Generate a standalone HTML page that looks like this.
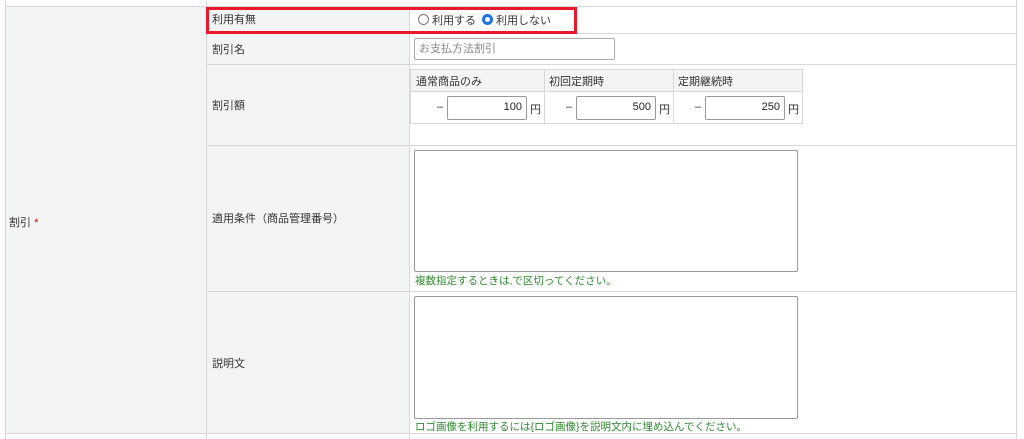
<!DOCTYPE html><html><head><meta charset="utf-8"><style>
*{box-sizing:border-box}body{margin:0;width:1024px;height:439px;background:#fff;position:relative;overflow:hidden;font-family:"Liberation Sans","Noto Sans CJK JP",sans-serif;font-size:11px;color:#333}
.a{position:absolute}
.h{position:absolute;height:1px;background:#d8d8d8}
.v{position:absolute;width:1px;background:#d8d8d8}
.inp{position:absolute;border:1px solid #999;border-radius:2px;background:#fff;text-align:right;padding-right:4px;font-size:11px;line-height:21px;color:#222}
.g{color:#2e8b2e;font-size:10.5px}
</style></head><body>
<div class="a" style="left:5px;top:6px;width:201px;height:427px;background:#f3f4f4"></div>
<div class="a" style="left:206px;top:6px;width:203px;height:427px;background:#f3f4f4"></div>
<div class="h" style="left:5px;top:6px;width:1012px"></div>
<div class="h" style="left:206px;top:33px;width:811px"></div>
<div class="h" style="left:206px;top:64px;width:811px"></div>
<div class="h" style="left:206px;top:145px;width:811px"></div>
<div class="h" style="left:206px;top:291px;width:811px"></div>
<div class="h" style="left:5px;top:433px;width:1012px"></div>
<div class="v" style="left:5px;top:0;height:439px"></div>
<div class="v" style="left:206px;top:0;height:439px"></div>
<div class="v" style="left:409px;top:6px;height:433px"></div>
<div class="v" style="left:1016px;top:0;height:439px"></div>
<div class="a" style="left:9px;top:214px">割引 <span style="color:#d00">*</span></div>
<div class="a" style="left:212px;top:11px">利用有無</div>
<div class="a" style="left:212px;top:41px">割引名</div>
<div class="a" style="left:212px;top:97px">割引額</div>
<div class="a" style="left:212px;top:210px">適用条件（商品管理番号）</div>
<div class="a" style="left:212px;top:355px">説明文</div>
<div class="a" style="left:206px;top:7px;width:371px;height:27px;border:3px solid #e8192c"></div>
<div class="a" style="left:418px;top:14px;width:11px;height:11px;border:1px solid #777;border-radius:50%;background:#fff"></div>
<div class="a" style="left:432px;top:12px">利用する</div>
<div class="a" style="left:482px;top:14px;width:11px;height:11px;border-radius:50%;background:#1a73e8"><div class="a" style="left:3px;top:3px;width:5px;height:5px;border-radius:50%;background:#fff"></div></div>
<div class="a" style="left:496px;top:12px">利用しない</div>
<div class="a" style="left:414px;top:38px;width:201px;height:22px;border:1px solid #aaa;border-radius:2px;padding-left:4px;line-height:20px;color:#888">お支払方法割引</div>
<div class="a" style="left:410px;top:69px;width:393px;height:55px;border:1px solid #d8d8d8"></div>
<div class="a" style="left:411px;top:70px;width:391px;height:22px;background:#f3f4f4;border-bottom:1px solid #d8d8d8"></div>
<div class="v" style="left:544px;top:70px;height:53px"></div>
<div class="v" style="left:673px;top:70px;height:53px"></div>
<div class="a" style="left:416px;top:73px">通常商品のみ</div>
<div class="a" style="left:549px;top:73px">初回定期時</div>
<div class="a" style="left:678px;top:73px">定期継続時</div>
<div class="a" style="left:437px;top:101px">–</div><div class="inp" style="left:447px;top:96px;width:80px;height:24px">100</div><div class="a" style="left:530px;top:101px">円</div>
<div class="a" style="left:566px;top:101px">–</div><div class="inp" style="left:576px;top:96px;width:80px;height:24px">500</div><div class="a" style="left:659px;top:101px">円</div>
<div class="a" style="left:695px;top:101px">–</div><div class="inp" style="left:705px;top:96px;width:80px;height:24px">250</div><div class="a" style="left:788px;top:101px">円</div>
<div class="a" style="left:414px;top:150px;width:384px;height:122px;border:1px solid #999;border-radius:2px"></div>
<div class="a g" style="left:415px;top:273px">複数指定するときは,で区切ってください。</div>
<div class="a" style="left:414px;top:296px;width:384px;height:123px;border:1px solid #999;border-radius:2px"></div>
<div class="a g" style="left:415px;top:419px">ロゴ画像を利用するには{ロゴ画像}を説明文内に埋め込んでください。</div>
</body></html>
